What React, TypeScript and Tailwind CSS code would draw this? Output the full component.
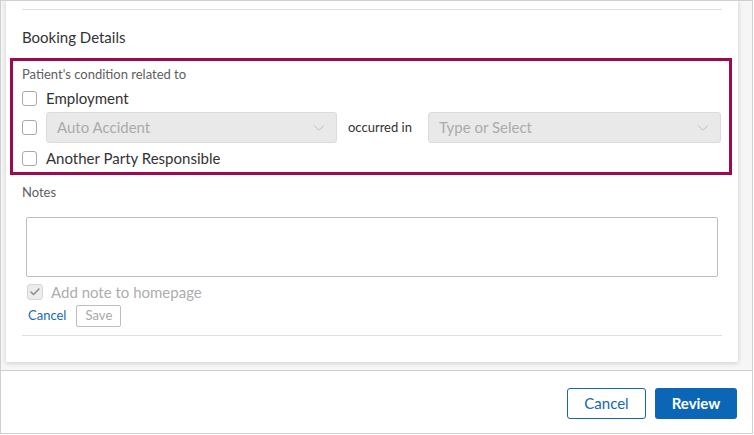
import { Check, ChevronDown } from 'lucide-react';

const Box = () => (
  <span className="w-[15px] h-[15px] shrink-0 rounded-[3px] border border-[#a9a9a9] bg-white" />
);

const Select = ({ placeholder, className }: { placeholder: string; className: string }) => (
  <div
    className={`h-[31px] flex items-center justify-between pl-[10px] pr-[8px] rounded-[3px] border border-[#dcdcdc] bg-[#e9e9e9] ${className}`}
  >
    <span className="text-[15px] text-[#ababab]">{placeholder}</span>
    <ChevronDown size={18} strokeWidth={1} className="text-[#b0b0b0]" />
  </div>
);

export default function App() {
  return (
    <div className="w-[753px] h-[434px] bg-white border border-[#cfcfcf] flex flex-col font-['Lato',sans-serif] text-[#333]">
      <div className="h-[370px] pl-[5px] pr-[14px] bg-[#f6f6f6] border-b border-[#cfcfcf] overflow-hidden">
        <div className="h-[361px] bg-white shadow-[0_1px_5px_rgba(0,0,0,0.18)] pt-[8px] px-4 flex flex-col">
          <div className="h-px bg-[#dedede]" />
          <h2 className="mt-[17px] h-[20px] leading-[20px] text-[15px]">Booking Details</h2>

          {/* condition group */}
          <div className="mt-[11px] -ml-[12px] -mr-[10px] border-[3px] border-[#9e0a4f] pl-[9px] pr-[8px] pt-[3px] pb-[3px]">
            <div className="h-[20px] leading-[20px] text-[13px] text-[#5e5e5e]">Patient's condition related to</div>
            <label className="mt-[3px] h-[22px] flex items-center gap-[9px]">
              <Box />
              <span className="text-[15px]">Employment</span>
            </label>
            <div className="mt-[3px] flex items-center">
              <Box />
              <Select placeholder="Auto Accident" className="ml-[9px] w-[291px]" />
              <span className="ml-[11px] mr-[16px] text-[13px]">occurred in</span>
              <Select placeholder="Type or Select" className="flex-1" />
            </div>
            <label className="mt-[4px] h-[22px] flex items-center gap-[9px]">
              <Box />
              <span className="text-[15px]">Another Party Responsible</span>
            </label>
          </div>

          <div className="mt-[8px] h-[18px] leading-[18px] text-[13px] text-[#5e5e5e]">Notes</div>
          <textarea className="mt-[16px] mx-[4px] h-[60px] resize-none rounded-[2px] border border-[#bdbdbd] outline-none" />
          <div className="mt-[5px] ml-[5px] h-[20px] flex items-center gap-[8px]">
            <span className="w-[16px] h-[16px] rounded-[3px] border border-[#d6d6d6] bg-[#ececec] flex items-center justify-center">
              <Check size={12} strokeWidth={3} className="text-[#8c8c8c]" />
            </span>
            <span className="text-[15px] text-[#adadad]">Add note to homepage</span>
          </div>
          <div className="mt-[3px] ml-[6px] flex items-center gap-[10px]">
            <button className="text-[13px] text-[#1769b3]">Cancel</button>
            <button className="w-[45px] h-[22px] rounded-[2px] border border-[#bdbdbd] text-[13px] text-[#a8a8a8]">Save</button>
          </div>
          <div className="mt-[8px] h-px bg-[#dedede]" />
        </div>
      </div>

      <footer className="flex-1 flex items-center justify-end gap-[9px] pr-[15px] pt-[2px]">
        <button className="w-[79px] h-[31px] rounded-[3px] border border-[#1466ad] text-[15px] text-[#1466ad]">
          Cancel
        </button>
        <button className="w-[82px] h-[31px] rounded-[3px] bg-[#0b67b5] text-[15px] font-bold text-white">
          Review
        </button>
      </footer>
    </div>
  );
}
